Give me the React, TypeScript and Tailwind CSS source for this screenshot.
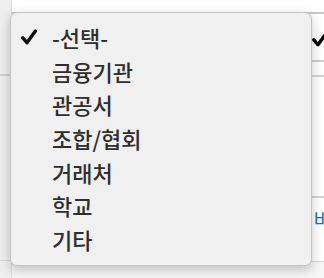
import React from "react"

const items = ["-선택-", "금융기관", "관공서", "조합/협회", "거래처", "학교", "기타"]

function Check({ className }: { className?: string }) {
  return (
    <svg viewBox="0 0 14 14" className={className}>
      <path d="M1.6 7.8 L5.2 12 L12.6 1.8" fill="none" stroke="currentColor" strokeWidth="3" strokeLinecap="round" strokeLinejoin="round" />
    </svg>
  )
}

export default function App() {
  return (
    <div
      className="relative w-[324px] h-[278px] overflow-hidden bg-[#f6f6f6]"
      style={{ fontFamily: '"Noto Sans CJK KR", "Noto Sans", sans-serif' }}
    >
      {/* page behind the menu */}
      <div className="flex h-full">
        <div className="w-[12px] border-r border-[#dcdcdc] bg-[#eeeeee]">
          <div className="h-[76px] border-b-2 border-[#cfcfcf]" />
          <div className="h-[185px] border-b border-[#d8d8d8]" />
        </div>
        <div className="flex-1 flex flex-col">
          <div className="h-[14px] border-b-2 border-[#c8c8c8] bg-white" />
          <div className="h-[48px] border-b-2 border-[#cfcfcf] bg-white flex justify-end items-start pt-[17px]">
            <Check className="w-[16px] h-[16px] text-black -mr-[4px]" />
          </div>
          <div className="h-[15px] border-b-2 border-[#d4d4d4] bg-white" />
          <div className="h-[121px] border-b-2 border-[#d4d4d4] bg-white" />
          <div className="h-[64px] border-b border-[#d4d4d4] bg-white flex justify-end items-start pt-[11px]">
            <span className="text-[19px] leading-[20px] text-[#1f6fb3] -mr-[7px]">비</span>
          </div>
        </div>
      </div>

      {/* dropdown menu */}
      <div className="absolute left-[10px] top-[12px] w-[302px] h-[254px] rounded-[7px] border border-[#c4c4c4] bg-[#f0f0f0] shadow-[0_4px_12px_rgba(0,0,0,0.22)] pt-[7px]">
        {items.map((item, i) => (
          <div key={item} className="flex items-center h-[33.7px] pl-[10px]">
            <div className="w-[31px] flex">
              {i === 0 && <Check className="w-[16px] h-[16px] text-[#111]" />}
            </div>
            <span className="text-[22px] leading-none font-medium text-[#2e2e2e]">{item}</span>
          </div>
        ))}
      </div>
    </div>
  )
}
